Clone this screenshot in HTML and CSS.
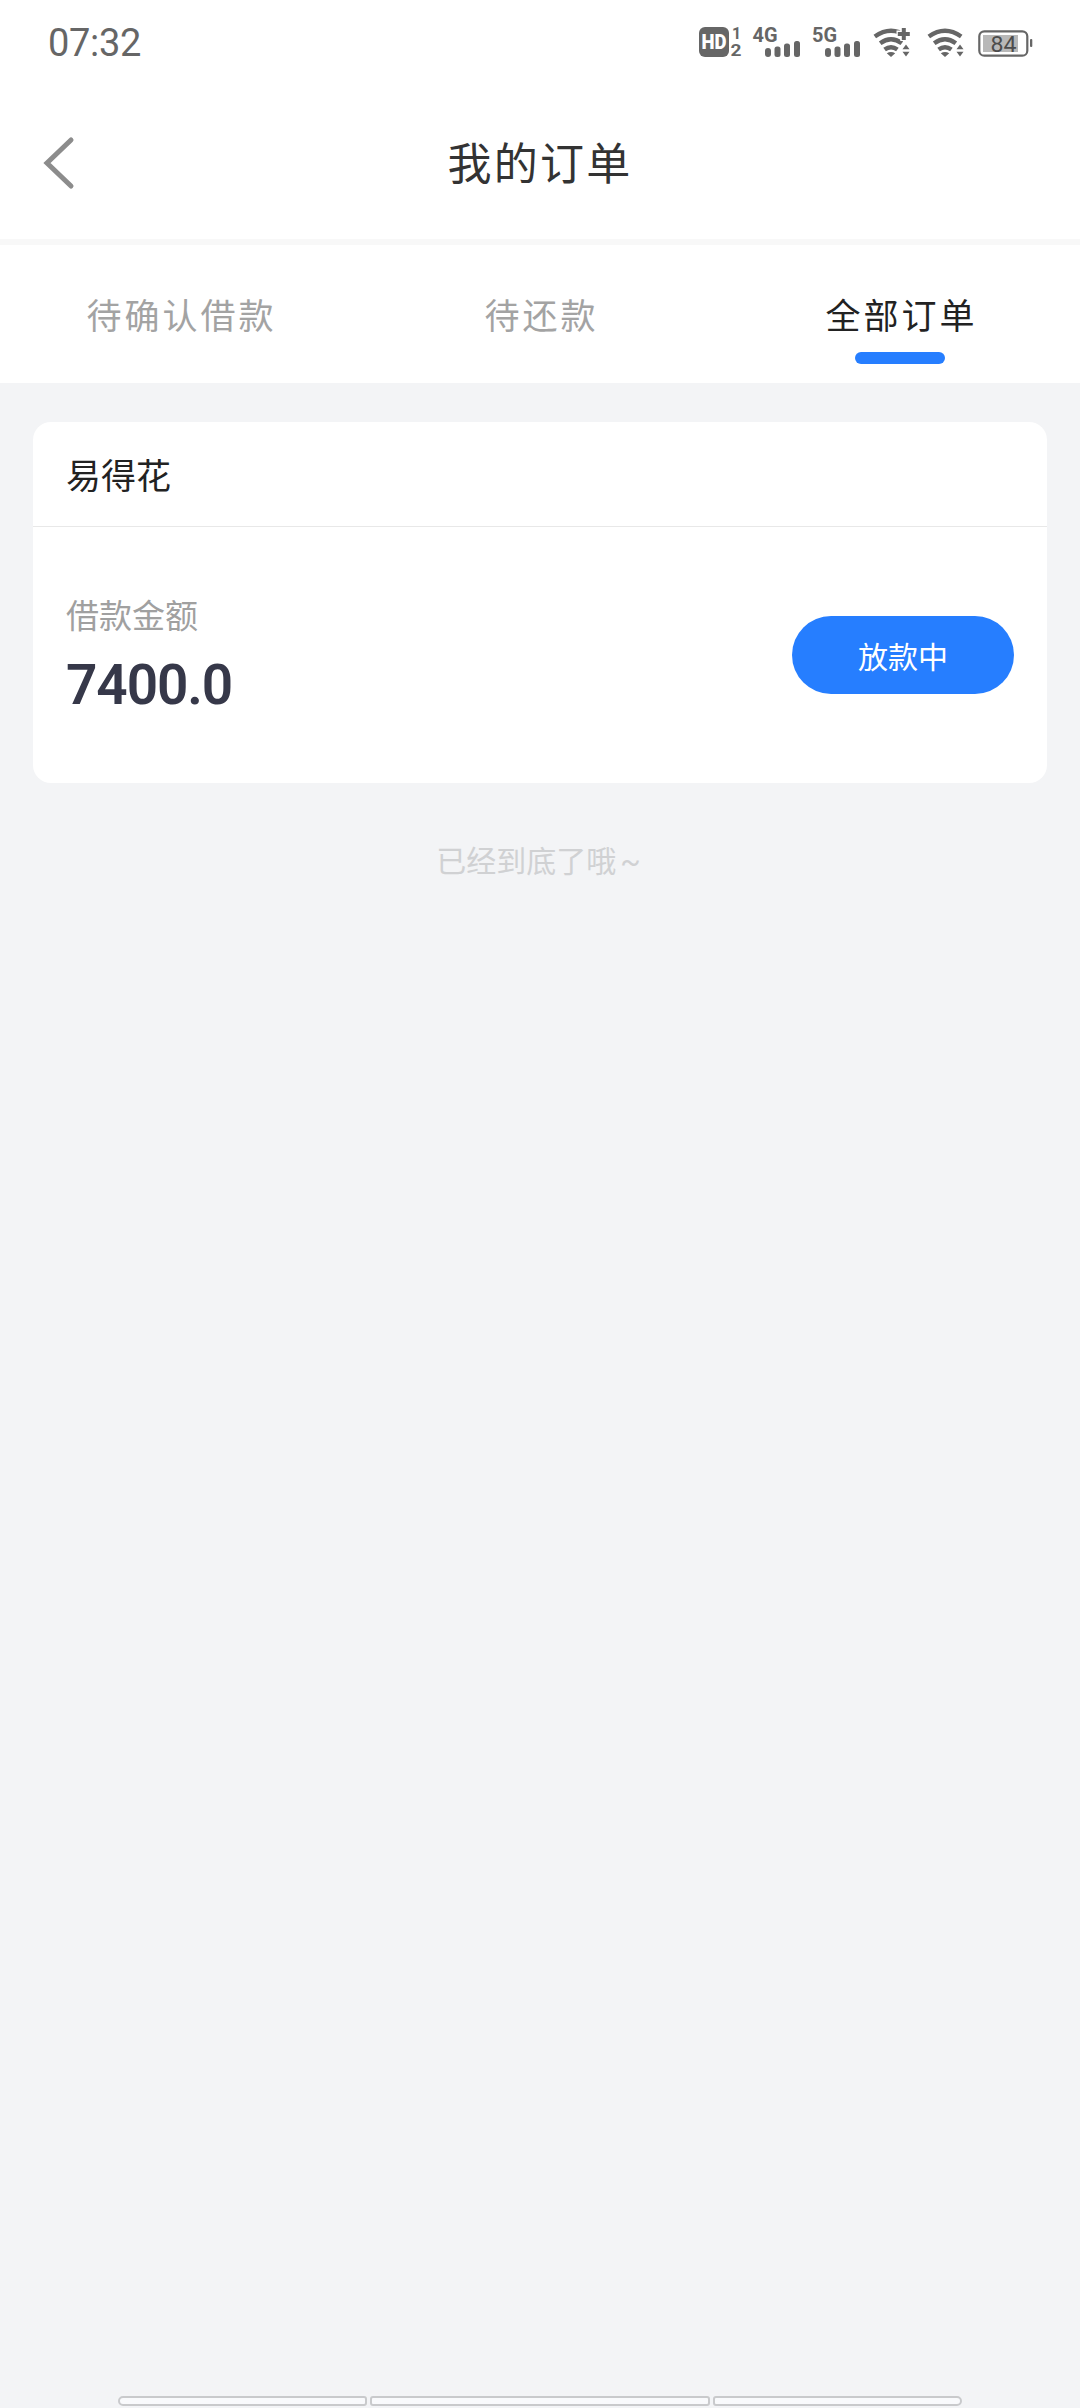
FILE: index.html
```html
<!DOCTYPE html>
<html lang="zh-CN">
<head>
<meta charset="utf-8">
<title>我的订单</title>
<link rel="stylesheet" href="styles.css">
</head>
<body>
<div class="app">
  <div class="status-bar">
    <span class="clock">07:32</span>
    <svg class="status-icons" width="340" height="44" viewBox="696 20 340 44" fill="#666">
      <rect x="699" y="27" width="30" height="30" rx="6"/>
      <text x="701.500" y="49" font-size="20" font-weight="900" fill="#fff" textLength="25" lengthAdjust="spacingAndGlyphs">HD</text>
      <text x="732" y="38.5" font-size="16" font-weight="700">1</text>
      <text x="730.5" y="56" font-size="16" font-weight="700" textLength="11" lengthAdjust="spacingAndGlyphs">2</text>
      <text x="752.5" y="42" font-size="20" font-weight="700" textLength="25" lengthAdjust="spacingAndGlyphs">4G</text>
      <text x="812" y="42" font-size="20" font-weight="700" textLength="25" lengthAdjust="spacingAndGlyphs">5G</text>
      <g id="bars">
        <rect x="765" y="48" width="6" height="9" rx="3"/>
        <rect x="774.5" y="46.5" width="6" height="10.5" rx="2.5"/>
        <rect x="784" y="43.5" width="6" height="13.5" rx="2.5"/>
        <rect x="794" y="41" width="6" height="16" rx="2.5"/>
      </g>
      <use href="#bars" x="60"/>
      <g id="wifi">
        <g fill="none" stroke="#666" stroke-width="4.4">
          <path d="M928.800 36.500Q945 25.200 961.200 36.500"/>
          <path d="M934.200 43.200Q945 35.200 955.800 43.200"/>
          <path d="M938.600 49.500Q945 44.800 951.400 49.500"/>
        </g>
        <path d="M940.800 53.300Q945 50.500 949.200 53.300L945 57Z"/>
        <path d="M956.500 49.300L960 44.500L963.500 49.300ZM956.500 51.800H963.500L960 56.500Z"/>
      </g>
      <g>
        <use href="#wifi" x="-54"/>
        <path d="M903.800 27V41M896.500 34H910" stroke="#fff" stroke-width="7"/>
        <path d="M903.800 28V40M897.800 34H909.800" stroke="#666" stroke-width="4"/>
      </g>
      <rect x="979.300" y="31.300" width="48" height="24.400" rx="5" fill="#fff" stroke="#666" stroke-width="2.200"/>
      <rect x="983" y="35" width="35" height="17" fill="#b8b8b8"/>
      <rect x="1030" y="39" width="2.300" height="8" rx="1"/>
      <text x="990.500" y="51.500" font-size="22" fill="#4c4c4c" textLength="26" lengthAdjust="spacingAndGlyphs">84</text>
    </svg>
  </div>
  <header class="nav">
    <svg class="back" width="32" height="56" viewBox="0 0 32 56" fill="none" stroke="#8c8c8c" stroke-width="5" stroke-linecap="round"><path d="M28 5L4 28L28 51"/></svg>
    <h1 class="title">我的订单</h1>
  </header>
  <nav class="tabs">
    <div class="tab"><span>待确认借款</span></div>
    <div class="tab"><span>待还款</span></div>
    <div class="tab active"><span>全部订单</span></div>
  </nav>
  <main class="content">
    <section class="card">
      <h2 class="card-title">易得花</h2>
      <div class="card-body">
        <div>
          <div class="label">借款金额</div>
          <div class="amount">7400.0</div>
        </div>
        <button class="state">放款中</button>
      </div>
    </section>
    <p class="end">已经到底了哦<span class="tilde">~</span></p>
  </main>
  <footer class="gesture">
    <i class="segment left"></i><i class="segment middle"></i><i class="segment right"></i>
  </footer>
</div>
</body>
</html>
```
FILE: styles.css
```css
* { box-sizing: border-box; }
body {
  margin: 0;
  background: #f3f4f6;
  font-family: Roboto, "Noto Sans CJK SC", sans-serif;
}
h1, h2, p { margin: 0; font-weight: 400; }
.app { width: 1080px; height: 2408px; display: flex; flex-direction: column; overflow: hidden; }
.status-bar {
  height: 86px;
  padding: 0 44px 0 48px;
  display: flex;
  justify-content: space-between;
  background: #fff;
}
.clock { padding-top: 21px; font-size: 38px; line-height: 44px; letter-spacing: -.3px; color: #666; }
.status-icons { margin-top: 20px; font-family: Roboto, sans-serif; }
.nav {
  height: 159px;
  padding: 0 43px;
  display: grid;
  grid-template-columns: 32px 1fr 32px;
  align-items: center;
  background: #fff;
  border-bottom: 6px solid #f8f8f8;
}
.title { padding-top: 5px; text-align: center; font-size: 44px; line-height: 60px; letter-spacing: 2.2px; color: #333; }
.tabs { height: 138px; display: grid; grid-template-columns: repeat(3, 1fr); background: #fff; }
.tab {
  display: flex;
  flex-direction: column;
  align-items: center;
  padding-top: 48px;
  font-size: 35px;
  line-height: 50px;
  letter-spacing: 3px;
  color: #a3a3a3;
}
.tab span { padding-left: 3px; }
.tab.active { color: #222; }
.tab.active::after { content: ""; width: 90px; height: 12px; margin-top: 9px; border-radius: 6px; background: #267eff; }
.content { flex: 1; padding: 39px 33px 0; }
.card { height: 361px; border-radius: 18px; background: #fff; }
.card-title {
  height: 105px;
  padding: 3px 0 0 33px;
  border-bottom: 1px solid #e8e8e8;
  font-size: 35px;
  line-height: 106px;
  color: #222;
}
.card-body { height: 256px; padding: 0 33px; display: flex; align-items: center; justify-content: space-between; }
.label { font-size: 33px; line-height: 48px; color: #a0a0a0; }
.amount { margin-top: 12px; font-size: 55px; line-height: 64px; font-weight: 600; letter-spacing: -1.1px; color: #363849; }
.state {
  width: 222px;
  height: 78px;
  padding: 0;
  border: 0;
  border-radius: 39px;
  background: #267eff;
  color: #fff;
  font: 30px "Noto Sans CJK SC", sans-serif;
}
.end { margin-top: 57px; padding-right: 3px; text-align: center; font-size: 30px; line-height: 44px; color: #d0d1d3; }
.tilde { margin-left: 4px; }
.gesture { height: 12px; padding: 0 118px; display: flex; gap: 3px; }
.segment { height: 10px; border: 2px solid #c9cacc; background: #f9fafc; border-radius: 3px; }
.left { width: 249px; border-radius: 5px 3px 3px 5px; }
.middle { flex: 1; }
.right { width: 249px; border-radius: 3px 5px 5px 3px; }
```
